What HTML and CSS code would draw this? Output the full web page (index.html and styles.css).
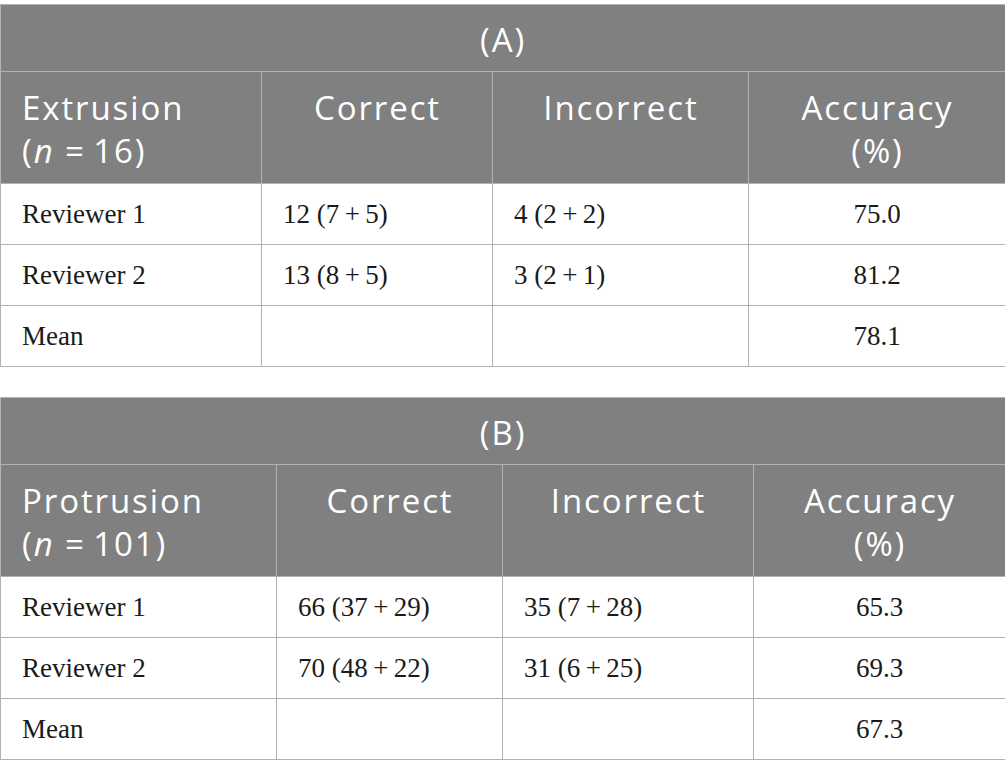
FILE: index.html
```html
<!DOCTYPE html>
<html>
<head>
<meta charset="utf-8">
<link rel="stylesheet" href="styles.css">
</head>
<body>
<div class="page">
  <table class="tbl tbl-a">
    <colgroup>
      <col class="c1"><col class="c2"><col class="c3"><col class="c4">
    </colgroup>
    <thead>
      <tr class="title-row"><th colspan="4">(A)</th></tr>
      <tr class="head-row">
        <th class="left">Extrusion<br>(<i>n</i> =&#8201;16)</th>
        <th>Correct</th>
        <th>Incorrect</th>
        <th>Accuracy<br>(%)</th>
      </tr>
    </thead>
    <tbody>
      <tr><td>Reviewer 1</td><td>12 (7&#8201;+&#8201;5)</td><td>4 (2&#8201;+&#8201;2)</td><td class="num">75.0</td></tr>
      <tr><td>Reviewer 2</td><td>13 (8&#8201;+&#8201;5)</td><td>3 (2&#8201;+&#8201;1)</td><td class="num">81.2</td></tr>
      <tr><td>Mean</td><td></td><td></td><td class="num">78.1</td></tr>
    </tbody>
  </table>

  <table class="tbl tbl-b">
    <colgroup>
      <col class="c1"><col class="c2"><col class="c3"><col class="c4">
    </colgroup>
    <thead>
      <tr class="title-row"><th colspan="4">(B)</th></tr>
      <tr class="head-row">
        <th class="left">Protrusion<br>(<i>n</i> =&#8201;101)</th>
        <th>Correct</th>
        <th>Incorrect</th>
        <th>Accuracy<br>(%)</th>
      </tr>
    </thead>
    <tbody>
      <tr><td>Reviewer 1</td><td>66 (37&#8201;+&#8201;29)</td><td>35 (7&#8201;+&#8201;28)</td><td class="num">65.3</td></tr>
      <tr><td>Reviewer 2</td><td>70 (48&#8201;+&#8201;22)</td><td>31 (6&#8201;+&#8201;25)</td><td class="num">69.3</td></tr>
      <tr><td>Mean</td><td></td><td></td><td class="num">67.3</td></tr>
    </tbody>
  </table>
</div>
</body>
</html>
```

FILE: styles.css
```css
html, body {
  margin: 0;
  padding: 0;
  background: #ffffff;
}

.page {
  padding-top: 4px;
  display: flex;
  flex-direction: column;
  gap: 30px;
}

.tbl {
  width: 1005px;
  border-collapse: collapse;
  table-layout: fixed;
}

.tbl-a .c1 { width: 261px; }
.tbl-a .c2 { width: 231px; }
.tbl-a .c3 { width: 256px; }
.tbl-a .c4 { width: 257px; }

.tbl-b .c1 { width: 276px; }
.tbl-b .c2 { width: 226px; }
.tbl-b .c3 { width: 251px; }
.tbl-b .c4 { width: 252px; }

.tbl th,
.tbl td {
  border: 1px solid #b2b2b2;
}

.tbl th {
  background: #7f807f;
  color: #ffffff;
  font-family: "Open Sans", "Noto Sans", sans-serif;
  font-weight: 400;
  font-size: 33px;
  letter-spacing: 1.9px;
  line-height: 43px;
  text-align: center;
  vertical-align: top;
  padding: 14px 20px 11px 21px;
}

.tbl th.left {
  text-align: left;
}

.tbl .title-row th {
  height: 67px;
  box-sizing: border-box;
  padding: 13px 22px 10px;
  vertical-align: middle;
}

.tbl .head-row th {
  height: 111px;
  box-sizing: border-box;
}

.tbl td {
  font-family: "Liberation Serif", "Times New Roman", serif;
  font-size: 27px;
  color: #1a1a1a;
  height: 61px;
  box-sizing: border-box;
  padding: 0 21px;
  vertical-align: middle;
  text-align: left;
}

.tbl td.num {
  text-align: center;
}
```
